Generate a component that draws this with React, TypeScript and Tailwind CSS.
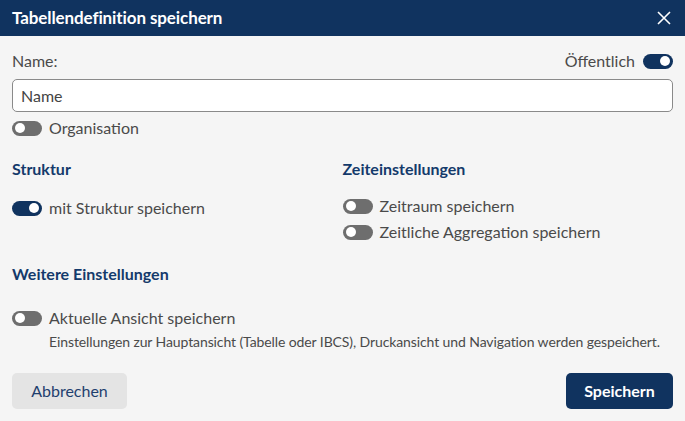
import React from "react";

function Toggle({ on }: { on?: boolean }) {
  return on ? (
    <span className="relative inline-block w-[30px] h-[15px] rounded-full bg-[#10335f] shrink-0">
      <span className="absolute right-[3px] top-[2.5px] w-[10px] h-[10px] rounded-full bg-white" />
    </span>
  ) : (
    <span className="relative inline-block w-[30px] h-[15px] rounded-full bg-[#6e6e6e] shrink-0">
      <span className="absolute left-[3px] top-[2.5px] w-[10px] h-[10px] rounded-full bg-white" />
    </span>
  );
}

export default function App() {
  return (
    <div className="w-[685px] h-[421px] bg-[#f5f5f5] text-[#4a4a4a] font-['Lato',sans-serif] flex flex-col overflow-hidden">
      <div className="h-[36px] bg-[#10335f] flex items-center justify-between pl-[12px] pr-[13px] shrink-0">
        <span className="text-white font-bold text-[17px] tracking-[-0.1px]">Tabellendefinition speichern</span>
        <svg width="16" height="16" viewBox="0 0 16 16" stroke="white" strokeWidth="1.6" fill="none">
          <path d="M2 2L14 14M14 2L2 14" />
        </svg>
      </div>
      <div className="flex flex-col px-[12px] pt-[14px]">
        <div className="flex items-center justify-between h-[22px]">
          <span className="text-[16px]">Name:</span>
          <div className="flex items-center gap-[8px]">
            <span className="text-[16px]">Öffentlich</span>
            <Toggle on />
          </div>
        </div>
        <div className="mt-[7px] h-[33px] border border-[#8a8a8a] rounded-[5px] bg-white flex items-center px-[8px]">
          <span className="text-[16px] text-[#444]">Name</span>
        </div>
        <div className="flex items-center gap-[7px] mt-[5px] h-[22px]">
          <Toggle />
          <span className="text-[16px]">Organisation</span>
        </div>
        <div className="grid grid-cols-2 mt-[19px]">
          <div className="flex flex-col">
            <span className="text-[16px] font-bold text-[#143a6b] h-[22px] leading-[22px]">Struktur</span>
            <div className="flex items-center gap-[7px] mt-[17px] h-[22px]">
              <Toggle on />
              <span className="text-[16px]">mit Struktur speichern</span>
            </div>
          </div>
          <div className="flex flex-col">
            <span className="text-[16px] font-bold text-[#143a6b] h-[22px] leading-[22px]">Zeiteinstellungen</span>
            <div className="flex items-center gap-[7px] mt-[15px] h-[22px]">
              <Toggle />
              <span className="text-[16px]">Zeitraum speichern</span>
            </div>
            <div className="flex items-center gap-[7px] mt-[4px] h-[22px]">
              <Toggle />
              <span className="text-[16px]">Zeitliche Aggregation speichern</span>
            </div>
          </div>
        </div>
        <span className="text-[16px] font-bold text-[#143a6b] h-[22px] leading-[22px] mt-[20px]">Weitere Einstellungen</span>
        <div className="flex items-center gap-[7px] mt-[22px] h-[22px]">
          <Toggle />
          <span className="text-[16px]">Aktuelle Ansicht speichern</span>
        </div>
        <span className="text-[14px] ml-[37px] mt-[4px] leading-[18px] tracking-[-0.1px]">
          Einstellungen zur Hauptansicht (Tabelle oder IBCS), Druckansicht und Navigation werden gespeichert.
        </span>
        <div className="flex items-center justify-between mt-[22px]">
          <button className="h-[36px] w-[115px] rounded-[5px] bg-[#e4e4e4] text-[#1f3f6e] text-[16px]">Abbrechen</button>
          <button className="h-[36px] w-[107px] rounded-[5px] bg-[#10335f] text-white font-bold text-[16px]">Speichern</button>
        </div>
      </div>
    </div>
  );
}
